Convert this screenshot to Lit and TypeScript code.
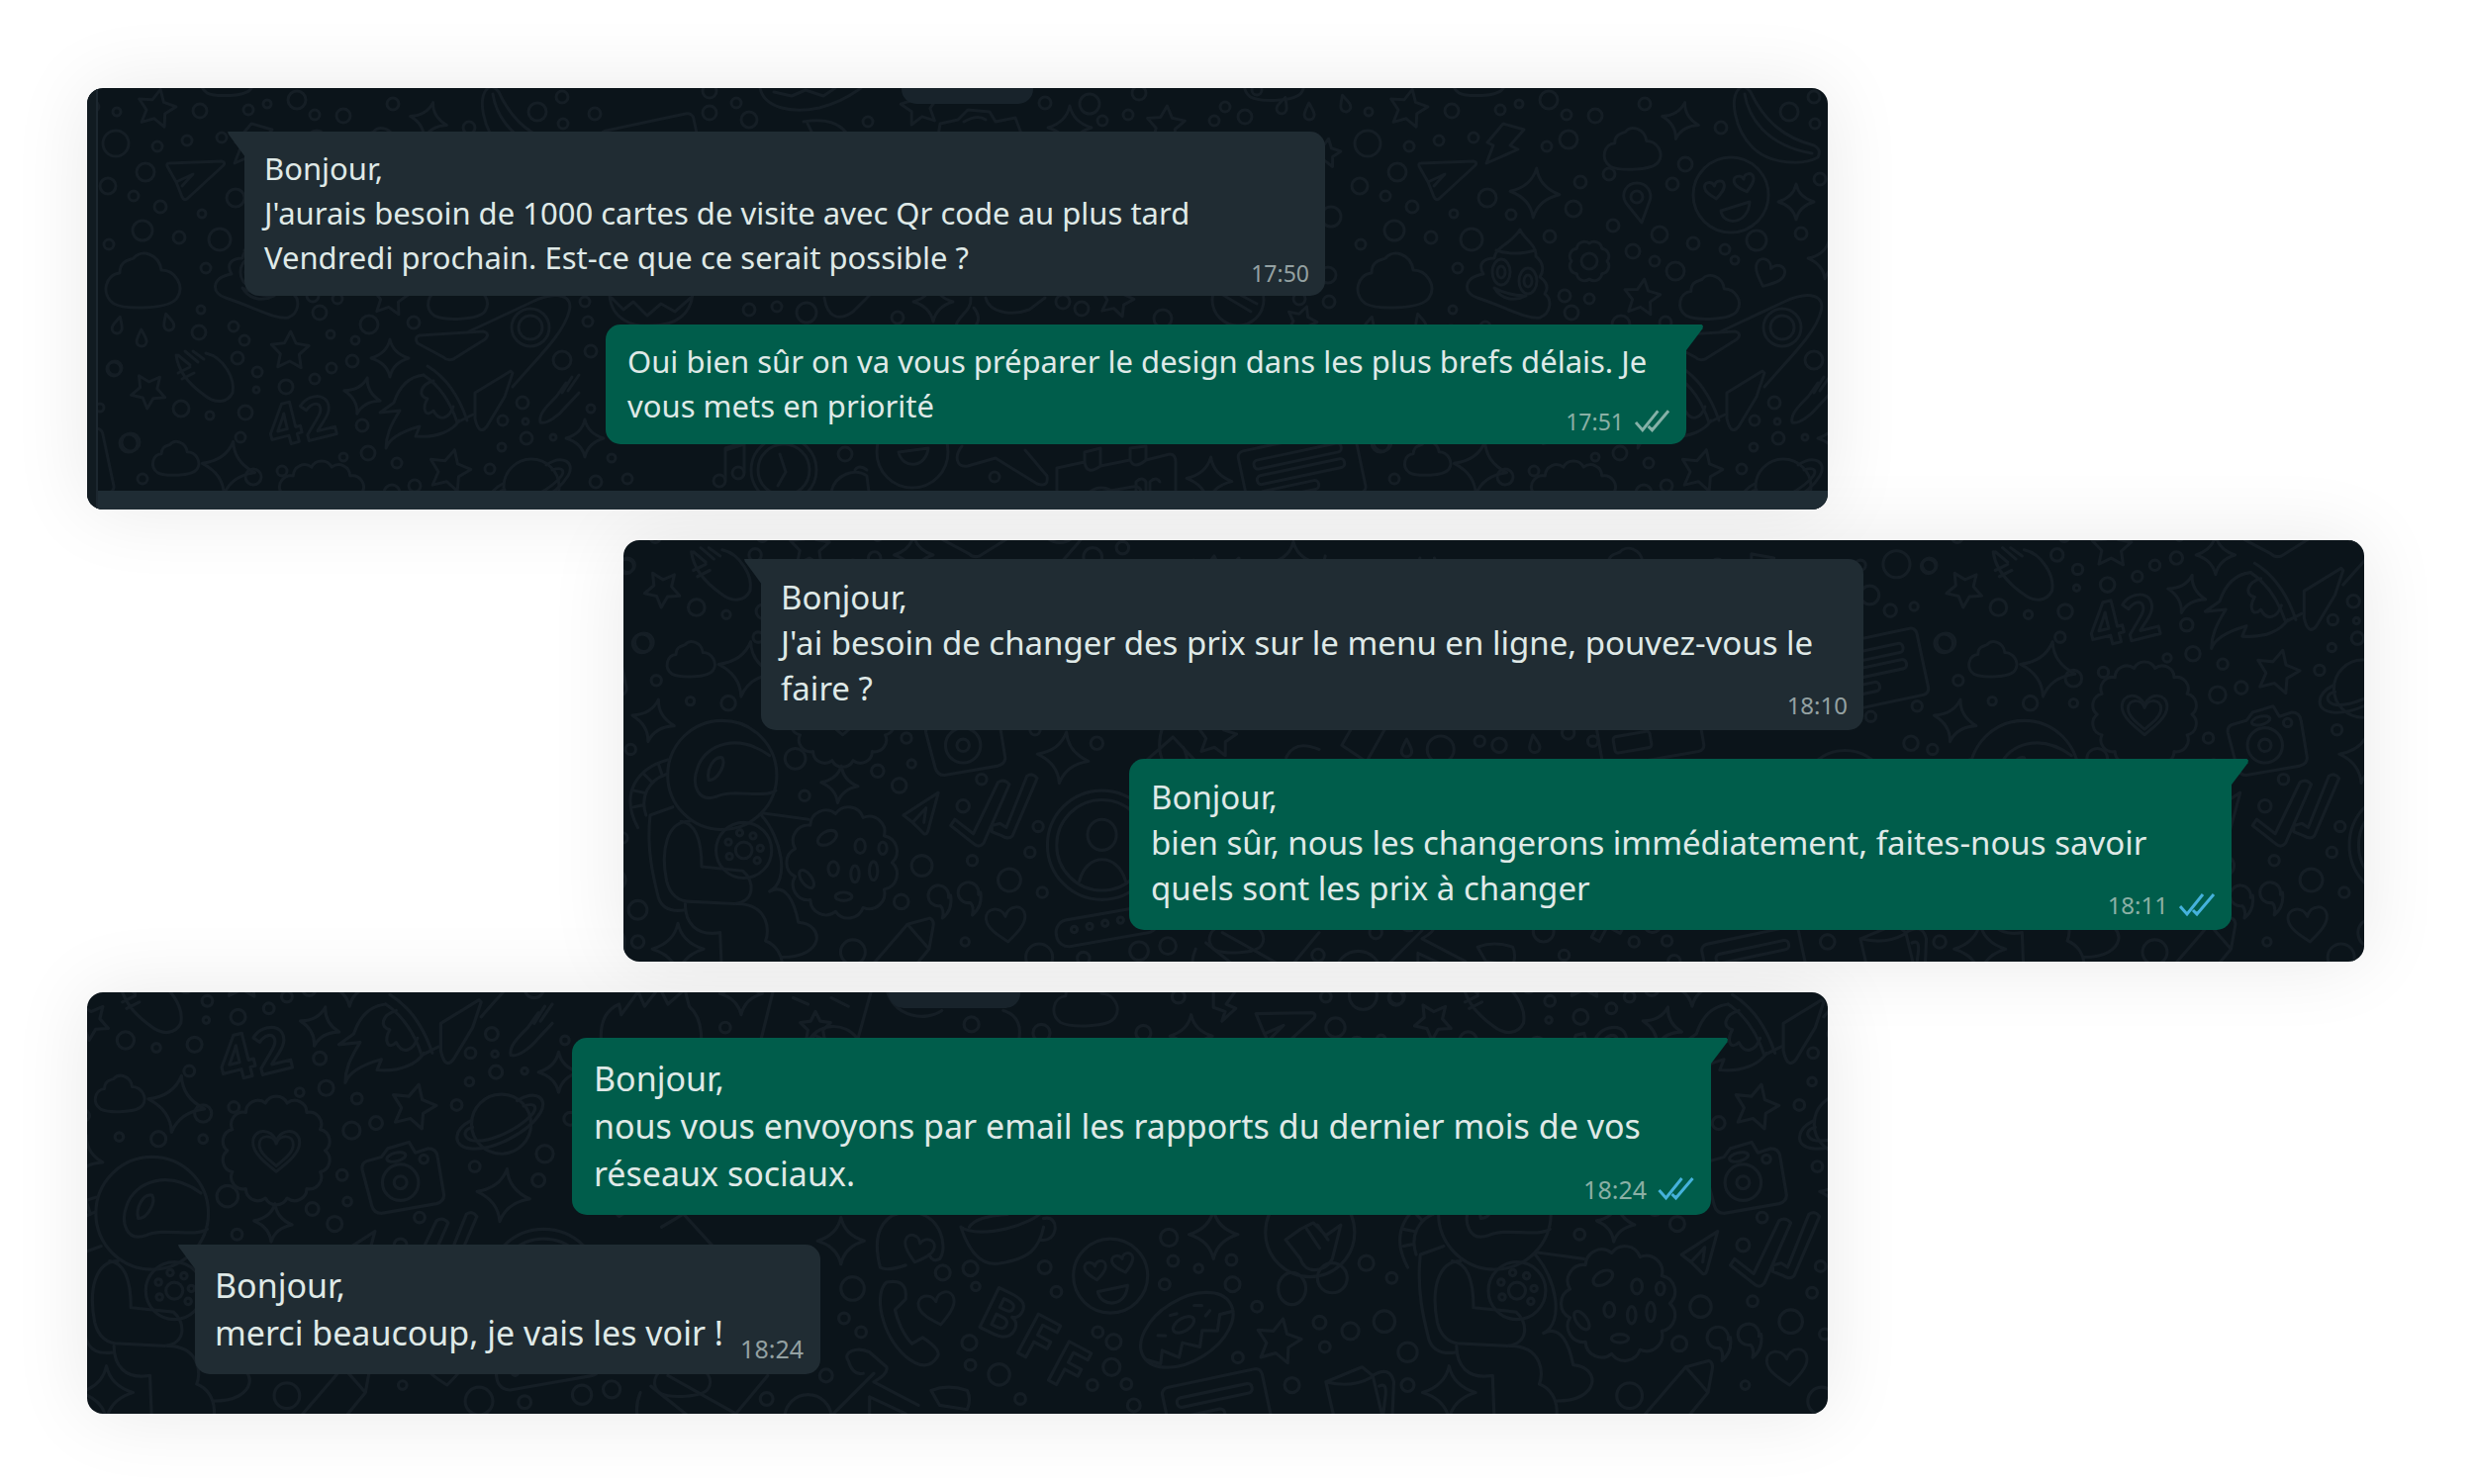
import { LitElement, html, css, svg, nothing } from "lit";
import { customElement, property } from "lit/decorators.js";

type Message = { side: "in" | "out"; lines: string[]; time: string; ticks?: "sent" | "read"; compact?: boolean };
type Chat = {
  name: string;
  place: "start" | "end";
  size: "small" | "medium" | "large";
  pill: boolean;
  framed: boolean;
  messages: Message[];
  wall: { x: number; y: number; scale: number };
};

const TILE = 1265;

/* Bubbles of the wallpaper: x, y, radius. */
const DOTS: number[][] = [
  [30,24,4],[114,23,7],[163,22,5],[182,16,4],[212,12,9],[230,27,5],[259,28,7],[309,16,6],[71,59,5],[101,53,5],[29,56,13],
  [59,85,9],[21,99,8],[47,109,5],[74,120,6],[116,127,4],[56,144,10],[93,151,6],[134,153,11],[22,158,5],[120,182,5],[136,50,5],
  [150,111,9],[386,40,6],[455,24,9],[480,9,6],[481,36,5],[513,26,6],[629,25,7],[656,15,5],[115,224,4],[113,247,7],[148,241,5],
  [159,255,5],[235,227,7],[285,239,9],[330,237,6],[246,249,4],[271,255,4],[268,276,6],[152,273,6],[172,287,5],[171,305,3],
  [201,302,7],[230,294,5],[247,283,5],[28,283,7],[95,324,8],[124,331,4],[160,328,7],[155,353,5],[44,358,9],[56,395,5],
  [197,387,5],[168,393,8],[259,373,4],[284,369,7],[313,379,5],[278,341,6],[440,318,6],[420,336,5],[443,337,3],[444,354,6],
  [471,353,3],[419,363,4],[509,266,6],[480,275,9],[509,324,4],[506,236,5],[503,216,5],[407,385,5],[514,398,6],[546,395,5],
  [530,374,4],[629,3,7],[669,32,8],[789,34,5],[968,15,6],[1013,16,10],[1026,33,5],[1052,27,5],[1063,5,7],[1139,33,5],
  [1150,19,5],[1170,29,7],[1182,2,5],[669,224,6],[697,221,5],[727,227,10],[819,232,6],[986,216,7],[1005,223,7],[1087,233,9],
  [766,370,7],[917,393,5],[210,59,5],[232,52,9],[244,95,6],[273,87,6],[237,122,8],[174,128,5],[213,150,6],[277,139,6],
  [350,77,7],[337,97,6],[324,148,8],[358,157,6],[297,165,7],[319,175,5],[390,163,5],[400,174,4],[340,185,9],[422,154,10],
  [467,147,6],[486,92,6],[228,210,6],[253,213,5],[1255,216,6],[1254,189,8],[1257,130,10],[1225,213,6],[126,417,7],
  [168,417,4],[89,415,4],[191,471,10],[200,507,5],[271,483,6],[292,497,7],[304,476,4],[299,451,5],[308,409,8],[331,402,6],
  [490,431,8],[424,443,5],[484,456,6],[372,491,5],[247,659,12],[356,649,4],[471,665,6],[525,658,9],[553,653,8],[428,664,13],
  [31,462,5],[42,359,9],[38,618,9],[38,649,6],[314,575,10],[294,610,7],[363,570,5],[419,562,5],[427,537,5],[354,517,6],
  [399,589,11],[431,601,5],[780,558,11],[865,543,7],[891,539,7],[896,556,4],[961,538,6],[972,561,5],[1078,510,8],[1082,532,5],
  [1106,539,4],[1137,531,5],[1074,554,5],[1138,554,7],[772,586,5],[788,599,5],[890,609,7],[891,630,5],[918,639,10],
  [1011,599,5],[1026,608,7],[1024,632,8],[1006,649,5],[1038,648,5],[1045,668,6],[938,662,5],[1161,575,5],[1143,623,5],
  [755,640,6],[699,662,6],[892,309,7],[958,317,8],[1054,317,7],[660,312,5],[1087,283,6],[1264,534,7],[23,548,5],[1220,590,6],
  [1249,598,8],[1225,613,5],[16,589,10],[1194,649,7],[1261,282,13],[27,284,7],[1226,283,5],[1235,312,9],[856,454,5],
  [875,458,7],[966,454,5],[942,446,6],[818,462,13],[1255,327,6],[13,323,4],[10,456,7],[1236,430,5],[16,420,5],
];

/* Five-pointed stars and four-pointed sparkles: x, y, radius, turn. */
const STARS: number[][] = [
  [70,21,20,12],[205,266,20,2],[62,306,18,-32],[366,387,22,14],[306,212,19,8],[1227,236,16,20],[1252,66,15,10],[842,19,20,-10],
  [1090,38,20,4],[1040,214,18,16],[1181,608,22,12],[745,312,15,0],[600,450,20,10],
];
const SPARKS: number[][] = [
  [345,33,19,14],[306,273,19,0],[278,311,19,16],[503,354,19,0],[143,384,27,10],[198,106,25,4],[462,115,18,0],[493,174,19,6],
  [993,40,22,0],[1134,396,23,4],[234,496,18,6],[451,470,25,8],[77,656,25,0],[53,434,21,14],[769,513,22,0],[1120,507,23,0],
  [855,216,20,0],[675,280,20,0],[1099,320,20,0],
];
const HEARTS: number[][] = [
  [434,188,15,24],[237,428,22,0],[237,428,16,0],[380,103,10,-8],[410,96,10,-14],[396,632,19,-6],[842,521,14,16],[860,577,17,-12],
  [1009,541,10,-8],[1035,534,10,-14],
];
/* Puffy clouds: x, y, scale. */
const CLOUDS: number[][] = [[57,194,1],[297,61,0.76],[375,211,0.8],[90,374,0.62],[1000,288,0.8],[142,-12,0.7],[1200,-10,0.8],[620,640,0.7]];
const DROPS: number[][] = [[31,240,15],[55,253,-2],[82,237,-15],[1208,18,18],[1235,24,-2],[6,16,-16],[785,461,0],[909,457,-8]];

const ring = (n: number, outer: number, inner: number, start = -90) =>
  Array.from({ length: n * 2 }, (_, i) => {
    const a = ((start + (i * 180) / n) * Math.PI) / 180;
    const r = i % 2 ? inner : outer;
    return `${(r * Math.cos(a)).toFixed(1)} ${(r * Math.sin(a)).toFixed(1)}`;
  }).join(" L");

const scallop = (n: number, r: number) => {
  const at = (i: number) => {
    const a = (i * 2 * Math.PI) / n;
    return `${(r * Math.cos(a)).toFixed(1)} ${(r * Math.sin(a)).toFixed(1)}`;
  };
  const bump = ((Math.PI * r) / n) * 1.1;
  let d = `M${at(0)}`;
  for (let i = 1; i <= n; i++) d += ` A${bump.toFixed(1)} ${bump.toFixed(1)} 0 0 1 ${at(i)}`;
  return d + "Z";
};

const spark = (r: number) => {
  const k = r * 0.16;
  return `M0 ${-r}Q${k} ${-k * 1.6} ${r} 0Q${k} ${k * 1.6} 0 ${r}Q${-k} ${k * 1.6} ${-r} 0Q${-k} ${-k * 1.6} 0 ${-r}Z`;
};

const HEART = "M0 .9C-.5 .5 -1 .1 -1 -.35C-1 -.95 -.2 -1 0 -.4C.2 -1 1 -.95 1 -.35C1 .1 .5 .5 0 .9Z";
const CLOUD =
  "M-30 24C-44 14 -38 -6 -24 -7C-24 -20 -14 -20 -10 -22C-2 -32 16 -26 18 -10C32 -10 42 6 34 18C26 30 -18 30 -30 24Z";

const place = (x: number, y: number, turn = 0, scale = 1) => `translate(${x} ${y}) rotate(${turn}) scale(${scale})`;

const doodles = () => svg`
  ${DOTS.map(([x, y, r]) => svg`<circle cx=${x} cy=${y} r=${r}></circle>`)}
  ${STARS.map(([x, y, r, t]) => svg`<path transform=${place(x, y, t)} d=${`M${ring(5, r, r * 0.5)}Z`}></path>`)}
  ${SPARKS.map(([x, y, r, t]) => svg`<path transform=${place(x, y, t)} d=${spark(r)}></path>`)}
  ${HEARTS.map(([x, y, r, t]) => svg`<path vector-effect="non-scaling-stroke" transform=${place(x, y, t, r)} d=${HEART}></path>`)}
  ${CLOUDS.map(([x, y, s]) => svg`<path vector-effect="non-scaling-stroke" transform=${place(x, y, 0, s)} d=${CLOUD}></path>`)}
  ${DROPS.map(([x, y, t]) => svg`<path transform=${place(x, y, t)} d="M0 -9C3 -3 5 0 5 3A5 5 0 0 1 -5 3C-5 0 -3 -3 0 -9Z"></path>`)}

  <!-- paper planes -->
  <path d="M83 76L136 74Q140 75 138 78L101 112Q98 114 96 110L90 95L81 79Q80 76 83 76ZM90 95L107 87L96 99"></path>
  <path d="M330 504L296 526L305 533L316 544Q319 545 320 541ZM305 533L318 519L316 533"></path>
  <path d="M1160 299L1213 298Q1217 299 1215 303L1178 337L1168 318ZM1168 318L1186 310L1174 322"></path>
  <!-- lightning -->
  <path d="M166 36L187 42L173 58L181 62L149 76L156 58L150 55Z"></path>
  <path d="M1120 272L1142 276L1132 290L1141 294L1128 306L1131 297L1120 293Z"></path>

  <!-- pile with eyes -->
  <path d="M183 143C186 152 200 158 199 170C206 176 208 184 203 191C210 196 212 202 208 208C216 214 214 228 203 232C190 234 170 222 140 212C126 208 124 192 146 188C140 178 146 172 157 172C158 160 174 158 183 143Z"></path>
  <path d="M159 164C170 168 186 168 198 164M157 202C164 214 178 216 189 210C180 210 168 208 157 202Z"></path>
  <ellipse cx="164" cy="186" rx="9" ry="13"></ellipse><ellipse cx="164" cy="186" rx="4" ry="6"></ellipse>
  <ellipse cx="191" cy="195" rx="9" ry="13"></ellipse><ellipse cx="191" cy="195" rx="4" ry="6"></ellipse>

  <!-- gear, pin -->
  <path transform=${place(253, 175)} d=${scallop(8, 18)}></path><circle cx="253" cy="175" r="8"></circle>
  <path d="M301 96C312 96 317 106 314 114L306 136L290 116C284 106 291 96 301 96Z"></path><circle cx="301" cy="110" r="6"></circle>

  <!-- smiling faces -->
  <circle cx="396" cy="108" r="38"></circle><path d="M386 124L415 115C414 138 388 140 386 124Z"></path>
  <circle cx="1023" cy="546" r="35"></circle><path d="M1011 561L1039 555C1038 576 1014 576 1011 561Z"></path>
  <circle cx="834" cy="368" r="36"></circle><path d="M820 368L850 364C848 384 824 386 820 368Z"></path>

  <!-- banana -->
  <path d="M405 0C394 10 400 42 418 60C436 78 470 78 484 70Q488 62 480 58C450 50 430 34 416 4Q410 -4 405 0ZM410 6C414 30 432 58 478 66"></path>

  <!-- mittens -->
  <path d="M92 270L104 280M99 266L112 277M107 266L118 274M90 270C92 286 104 300 118 310C130 320 142 318 147 308C150 294 138 272 120 268M92 288L104 282M96 294L108 288"></path>
  <path d="M497 290L486 306M490 292L480 308M484 298L474 312C464 322 456 330 458 338C464 340 476 332 484 322L497 308"></path>
  <path d="M745 212C748 232 760 236 774 226L792 208"></path>

  <!-- rocket -->
  <path d="M386 246L450 216C476 204 492 210 487 226C482 248 452 276 430 302"></path>
  <circle cx="448" cy="242" r="19"></circle><circle cx="448" cy="242" r="12"></circle>
  <path d="M336 250L400 246Q408 248 402 254L370 274Q364 276 360 272L334 258Q330 252 336 250Z"></path>
  <path d="M428 286L392 308L392 334Q396 352 404 342L422 312L430 288Z"></path>
  <path d="M344 281C362 292 376 312 384 336M340 290C358 302 368 320 374 338L390 330"></path>
  <path d="M340 290C322 292 314 306 310 318L296 328L316 326C306 342 302 352 302 364C306 352 322 346 336 342L332 352C354 354 370 346 376 336"></path>
  <path d="M350 296C336 300 334 312 344 314C338 324 342 334 350 326C356 338 366 334 370 322"></path>

  <!-- doodled lettering -->
  <text class="doodle-text" transform="translate(188 364) rotate(-14)">4</text>
  <text class="doodle-text" transform="translate(222 357) rotate(-14)">2</text>
  <text class="doodle-text" transform="translate(895 592) rotate(26)">B</text>
  <text class="doodle-text" transform="translate(931 616) rotate(28)">F</text>
  <text class="doodle-text" transform="translate(960 642) rotate(28)">F</text>

  <!-- badge, planet, camera -->
  <path transform=${place(237, 428)} d=${scallop(14, 46)}></path>
  <circle cx="449" cy="403" r="28"></circle>
  <path d="M464 381C480 370 494 378 486 392C474 412 440 428 420 426C402 424 404 408 420 400M470 386C482 382 484 388 476 396C462 410 434 422 420 418C412 414 414 408 422 406"></path>
  <path d="M322 438L336 434L342 426L362 420L368 430L380 426Q388 426 389 434L395 470Q395 476 388 478L336 487Q329 487 327 480L318 446Q317 440 322 438Z"></path>
  <circle cx="354" cy="458" r="17"></circle><circle cx="354" cy="458" r="6"></circle><circle cx="376" cy="436" r="4"></circle>
  <ellipse cx="350" cy="434" rx="9" ry="4" transform="rotate(-14 350 434)"></ellipse>

  <!-- astronaut -->
  <circle cx="120" cy="487" r="53"></circle>
  <path d="M172 502C160 510 130 500 114 508C96 514 90 496 96 480C104 456 136 446 166 468M107 492C104 482 112 468 120 470C124 476 116 492 107 492Z"></path>
  <path d="M67 472C38 480 20 504 38 538M66 486C48 492 40 508 46 526M58 476L62 488M44 486L52 494M34 502L44 504M34 518L44 516"></path>
  <path d="M72 518L50 526C46 560 54 590 58 606C62 618 72 620 84 618M88 532C66 532 60 560 66 590C70 606 80 610 90 610L132 612C152 610 152 590 140 580L100 576C100 556 96 534 80 532"></path>
  <circle cx="141" cy="560" r="27"></circle><circle cx="141" cy="560" r="8"></circle>
  <circle cx="137" cy="543" r="3"></circle><circle cx="150" cy="546" r="3"></circle><circle cx="157" cy="558" r="3"></circle><circle cx="154" cy="570" r="3"></circle><circle cx="126" cy="552" r="3"></circle><circle cx="127" cy="566" r="3"></circle>
  <path d="M158 526C178 548 186 590 166 600C182 592 190 610 194 630C220 632 220 664 178 664M84 612C84 630 94 644 118 640L120 690M134 612C166 612 166 640 162 648C184 656 182 690 168 690M160 524L204 530"></path>

  <!-- cookie -->
  <path transform=${place(237, 572)} d=${scallop(11, 48)}></path>
  <ellipse cx="222" cy="548" rx="10" ry="6" transform="rotate(-30 222 548)"></ellipse><ellipse cx="254" cy="556" rx="5" ry="7"></ellipse>
  <ellipse cx="228" cy="578" rx="5" ry="7"></ellipse><ellipse cx="249" cy="583" rx="4" ry="8"></ellipse><ellipse cx="267" cy="580" rx="4" ry="9"></ellipse>
  <ellipse cx="202" cy="588" rx="5" ry="10" transform="rotate(-36 202 588)"></ellipse><ellipse cx="238" cy="605" rx="8" ry="4"></ellipse><ellipse cx="276" cy="558" rx="4" ry="6"></ellipse>

  <!-- double tick -->
  <path d="M342 536L346 530L364 544L388 494Q394 490 399 496L374 553Q370 558 365 554ZM382 536L390 534L396 538L416 488Q422 484 426 490L402 546Q398 550 392 546L382 542Z"></path>

  <!-- avatar and code field -->
  <circle cx="489" cy="555" r="53"></circle><circle cx="489" cy="555" r="44"></circle><ellipse cx="489" cy="545" rx="14" ry="15"></ellipse>
  <path d="M467 590C474 562 504 562 512 590"></path>
  <rect x="444" y="621" width="100" height="26" rx="12" transform="rotate(-10 494 634)"></rect>
  <circle cx="462" cy="637" r="3"></circle><circle cx="477" cy="634" r="3"></circle><circle cx="492" cy="631" r="3"></circle><circle cx="507" cy="628" r="3"></circle>

  <!-- quotes, crayon -->
  <path d="M340 606A10 10 0 1 0 332 614Q336 618 334 626Q344 618 342 604M369 603A10 10 0 1 0 361 611Q365 615 363 623Q373 615 371 601"></path>
  <path d="M262 676L300 632L322 626Q326 628 325 634L321 656L288 696M300 632L321 656"></path>

  <!-- creature, bag and desk things -->
  <path d="M546 342C538 310 546 296 560 290L562 300L578 278L584 292L598 274L606 290L622 276L626 292C640 304 640 330 632 344"></path>
  <path d="M706 274L694 322M798 276L784 326M724 284L738 290M760 284L776 292M738 326A26 24 0 0 1 784 322"></path>
  <path d="M812 276C820 304 850 306 864 296M922 296C936 300 940 312 936 326"></path>
  <path d="M645 396V364L664 358V388M645 366L664 360"></path><circle cx="639" cy="397" r="6"></circle><circle cx="658" cy="389" r="6"></circle>
  <circle cx="704" cy="386" r="33"></circle><circle cx="704" cy="386" r="26"></circle><path d="M700 370L706 388L698 402"></path>
  <path d="M752 408C756 390 776 384 788 392L790 408M776 386Q780 380 788 386"></path>
  <path d="M884 362C876 372 878 384 890 382L918 374L960 400Q972 404 970 392L948 366"></path>
  <path d="M980 384L1008 378V368L1024 364V382L1054 376V364L1070 362V376L1094 370Q1100 370 1100 378V412M980 384V412M1008 378Q1010 392 1024 382M1054 376Q1058 386 1070 376M1010 412A18 18 0 0 1 1040 412M1060 412V398Q1066 392 1070 398V412M1074 412V398Q1080 392 1084 398"></path>

  <!-- letter with lines -->
  <g transform="translate(1227 385) rotate(-12)">
    <rect x="-60" y="-30" width="120" height="66" rx="6"></rect>
    <rect x="-46" y="-18" width="90" height="9" rx="4"></rect><rect x="-46" y="-2" width="90" height="9" rx="4"></rect><rect x="-46" y="14" width="60" height="9" rx="4"></rect>
  </g>
  <g transform="translate(1123 668) rotate(-12)">
    <rect x="-48" y="-26" width="96" height="66" rx="6"></rect><rect x="-36" y="-14" width="72" height="9" rx="4"></rect><rect x="-36" y="4" width="42" height="9" rx="4"></rect>
  </g>
  <g transform="translate(1020 440) rotate(-10)"><rect x="-50" y="-30" width="100" height="62" rx="6"></rect><rect x="-36" y="4" width="36" height="16" rx="3"></rect></g>
  <g transform="translate(570 60) rotate(-12)"><rect x="-48" y="-26" width="96" height="60" rx="6"></rect></g>

  <!-- doughnuts -->
  <path d="M528 210C530 234 552 242 570 240C596 240 610 228 612 208M530 212L542 224L552 216L566 230L580 218L594 226L610 212"></path>
  <path d="M680 0C684 20 712 26 740 20C764 14 776 4 782 0M694 4L712 8L726 2L744 8L756 0"></path>
  <path d="M908 212C912 228 936 230 952 224L968 212"></path>
  <g transform="translate(1095 597) rotate(-32)">
    <ellipse cx="0" cy="0" rx="48" ry="29"></ellipse><ellipse cx="0" cy="-6" rx="11" ry="6"></ellipse>
    <path d="M-47 4L-38 14L-30 4L-20 18L-10 8L2 20L12 8L24 16L34 4L46 8M-26 -10L-20 -6M-6 -20L0 -18M18 -16L24 -12M28 -4L22 -2"></path>
  </g>

  <!-- photo and flower peeking out of a bubble -->
  <path d="M860 48L862 36L880 32L890 22L912 24L918 34L938 30L944 46M886 34Q900 26 908 32"></path>
  <path d="M724 34C748 30 760 36 768 46M728 36L734 48"></path>
  <circle cx="1163" cy="214" r="26"></circle><path d="M1146 208L1176 226M1152 202L1182 218"></path>
  <path d="M893 212C894 226 880 230 878 240M896 222Q904 232 898 240"></path>

  <!-- sticker, cup, phone -->
  <path d="M806 538C796 500 814 484 836 486C864 488 870 520 862 530Q856 534 852 526M806 538Q812 542 830 536"></path>
  <path d="M882 500C890 524 902 538 920 534C946 530 956 520 960 500M882 500C900 512 950 498 960 484M960 492C976 488 974 516 956 512M890 500Q896 490 926 488"></path>
  <path d="M812 552C800 562 806 600 830 622C844 634 854 632 860 622Q864 616 846 604L836 610C828 602 822 588 820 578L830 568Q832 548 812 552Z"></path>
  <path d="M776 626C770 618 784 612 796 618L812 632Q814 638 800 646L842 668M790 638Q780 640 776 626M800 638L762 676M796 660V676M796 660L830 676M854 654Q870 648 888 654Q892 662 888 672L862 668Z"></path>
  <circle cx="738" cy="680" r="22"></circle>
  <path d="M722 458L738 430L764 442L746 474ZM700 462Q676 452 668 470"></path>

  <!-- tulips in a ring, jug -->
  <circle cx="1211" cy="505" r="42"></circle>
  <path d="M1188 512L1202 502L1214 496L1226 508L1240 498L1232 530C1224 544 1206 544 1202 530ZM1208 502L1220 520M1218 498L1228 512"></path>
  <ellipse cx="1194" cy="558" rx="13" ry="15"></ellipse><ellipse cx="1232" cy="548" rx="14" ry="14"></ellipse>
  <path d="M1226 646L1260 632L1270 640L1282 690M1226 646L1236 690M1226 646Q1250 652 1268 642M1270 640Q1286 630 1290 646L1288 690M1276 650Q1284 646 1282 660L1280 676"></path>
  <path d="M526 478L558 450L590 484M548 440Q538 470 560 490Q578 480 568 460M610 476L650 520M600 500L640 476"></path>
  <path d="M590 650L640 690M606 640L670 676L700 640M580 656Q570 680 590 700"></path>
`;

@customElement("chat-wallpaper")
class ChatWallpaper extends LitElement {
  @property({ attribute: false }) wall = { x: 0, y: 0, scale: 1 };

  static styles = css`
    :host { display: block; overflow: hidden; }
    .canvas { display: block; width: 100%; height: 100%; fill: none; stroke: #151e25; stroke-width: 3; stroke-linejoin: round; stroke-linecap: round; }
    .doodle-text { font: 700 58px "Open Sans", sans-serif; stroke-width: 3; }
  `;

  render() {
    const { x, y, scale } = this.wall;
    return html`<svg class="canvas" aria-hidden="true">
      <defs><g id="tile">${doodles()}</g></defs>
      <g transform=${`translate(${x} ${y}) scale(${scale})`}>
        ${[-1, 0, 1, 2].map((n) => svg`<use href="#tile" x=${n * TILE}></use>`)}
      </g>
    </svg>`;
  }
}

@customElement("chat-bubble")
class ChatBubble extends LitElement {
  @property({ attribute: false }) message!: Message;

  static styles = css`
    :host { display: block; max-width: 100%; box-sizing: border-box; }
    .bubble {
      position: relative;
      display: grid;
      box-sizing: border-box;
      padding: var(--pad) 16px var(--pad-end) 20px;
      border-radius: 15px;
      color: #dfe9e7;
      font-size: var(--text);
      line-height: var(--line);
    }
    .in { background: #202c33; border-top-left-radius: 0; }
    .out { background: #005d4b; border-top-right-radius: 0; padding-left: 22px; }
    .bubble::before { content: ""; position: absolute; top: 0; width: 18px; height: 26px; background: inherit; }
    .in::before { right: calc(100% - 1px); clip-path: polygon(0 0, 100% 0, 100% 100%, 94% 94%, 4% 10%); }
    .out::before { left: calc(100% - 1px); clip-path: polygon(0 0, 92% 0, 100% 6%, 97% 16%, 6% 100%, 0 100%); }
    .text { grid-area: 1 / 1; margin: 0; white-space: nowrap; }
    .meta {
      grid-area: 1 / 1;
      align-self: end;
      justify-self: end;
      display: flex;
      align-items: center;
      gap: 11px;
      height: 24px;
      margin-bottom: calc(var(--foot) - var(--pad-end));
      color: #94a1a2;
      font-size: var(--time);
      line-height: 24px;
    }
    .out .meta { color: #8bb0a5; }
    .compact { grid-template-columns: auto auto; justify-content: space-between; column-gap: 16px; padding-right: 17px; }
    .compact .meta { grid-area: 1 / 2; }
    .ticks { width: var(--ticks); height: 24px; fill: none; stroke-width: 3; }
    .sent { stroke: #86b1a8; }
    .read { stroke: #45b2dc; }
  `;

  render() {
    const m = this.message;
    return html`<article class="bubble ${m.side} ${m.compact ? "compact" : ""}">
      <p class="text">${m.lines.map((line, i) => html`${i ? html`<br />` : nothing}${line}`)}</p>
      <span class="meta">
        <time>${m.time}</time>
        ${m.ticks
          ? html`<svg class="ticks ${m.ticks}" viewBox="0 0 37 24" role="img" aria-label=${m.ticks === "read" ? "Lu" : "Distribué"}>
              <path d="M1 13L8 21L24 1M14 17L18 21L35 1M17 21L19 19"></path>
            </svg>`
          : nothing}
      </span>
    </article>`;
  }
}

@customElement("app-root")
class AppRoot extends LitElement {
  private chats: Chat[] = [
    {
      name: "Cartes de visite", place: "start", size: "small", pill: true, framed: true, wall: { x: 0, y: 0, scale: 1 },
      messages: [
        { side: "in", time: "17:50", lines: ["Bonjour,", "J'aurais besoin de 1000 cartes de visite avec Qr code au plus tard", "Vendredi prochain. Est-ce que ce serait possible ?"] },
        { side: "out", time: "17:51", ticks: "sent", lines: ["Oui bien sûr on va vous préparer le design dans les plus brefs délais. Je", "vous mets en priorité"] },
      ],
    },
    {
      name: "Menu en ligne", place: "end", size: "medium", pill: false, framed: false, wall: { x: -25, y: -269, scale: 1.04 },
      messages: [
        { side: "in", time: "18:10", lines: ["Bonjour,", "J'ai besoin de changer des prix sur le menu en ligne, pouvez-vous le", "faire ?"] },
        { side: "out", time: "18:11", ticks: "read", lines: ["Bonjour,", "bien sûr, nous les changerons immédiatement, faites-nous savoir", "quels sont les prix à changer"] },
      ],
    },
    {
      name: "Réseaux sociaux", place: "start", size: "large", pill: true, framed: false, wall: { x: -63, y: -299, scale: 1.0725 },
      messages: [
        { side: "out", time: "18:24", ticks: "read", lines: ["Bonjour,", "nous vous envoyons par email les rapports du dernier mois de vos", "réseaux sociaux."] },
        { side: "in", time: "18:24", compact: true, lines: ["Bonjour,", "merci beaucoup, je vais les voir !"] },
      ],
    },
  ];

  static styles = css`
    :host { display: block; min-height: 100vh; background: #fff; font-family: "Noto Sans", "Open Sans", sans-serif; }
    .page {
      display: grid;
      grid-template-columns: 542px minmax(0, 1fr) 542px;
      gap: 31px 0;
      padding: 89px 111px 71px 88px;
    }
    .panel {
      position: relative;
      display: flex;
      border-radius: 16px;
      overflow: hidden;
      background: #0b141a;
    }
    .card { border-radius: 16px; box-shadow: 0 0 80px rgba(0, 0, 0, 0.09); }
    .start { grid-column: 1 / 3; }
    .end { grid-column: 2 / 4; }
    .wall { position: absolute; inset: 0; }
    .rail { position: relative; width: 9px; background: #111b21; border-right: 2px solid #1c272f; }
    .body { position: relative; flex: 1; display: flex; flex-direction: column; }
    .thread { display: flex; flex-direction: column; gap: var(--gap); margin: 0; list-style: none; }
    .item { display: flex; }
    .item.out { justify-content: flex-end; }
    .wide { width: var(--bubble); }
    .compact { width: 632px; }
    .footer { height: 19px; background: #1f2c34; }
    .pill { position: absolute; top: 0; left: calc(50% - 66px); width: 133px; height: 16px; border-radius: 0 0 15px 15px; background: #18232b; }
    .small .pill { left: calc(50% - 62px); }
    .large .pill { left: calc(50% - 70px); }

    .small { --text: 31px; --line: 45px; --pad: 15px; --pad-end: 16px; --foot: 11px; --gap: 29px; --time: 23px; --ticks: 36px; --bubble: 1092px; }
    .medium { --text: 33px; --line: 46px; --pad: 16px; --pad-end: 19px; --foot: 13px; --gap: 29px; --time: 24px; --ticks: 37px; --bubble: 1114px; }
    .large { --text: 34px; --line: 48px; --pad: 17px; --pad-end: 18px; --foot: 14px; --gap: 30px; --time: 25px; --ticks: 38px; --bubble: 1151px; }
    .small .thread { padding: 44px 143px 47px 148px; }
    .medium .thread { padding: 19px 134px 32px 139px; }
    .large .thread { padding: 46px 118px 40px 109px; }
  `;

  render() {
    return html`<main class="page">
      ${this.chats.map(
        (c) => html`<div class="card ${c.place}">
          <section class="panel ${c.size}" aria-label=${c.name}>
            <chat-wallpaper class="wall" .wall=${c.wall}></chat-wallpaper>
            ${c.framed ? html`<div class="rail"></div>` : nothing}
            <div class="body">
              ${c.pill ? html`<div class="pill"></div>` : nothing}
              <ul class="thread">
                ${c.messages.map(
                  (m) => html`<li class="item ${m.side}">
                    <chat-bubble class=${m.compact ? "compact" : "wide"} .message=${m}></chat-bubble>
                  </li>`
                )}
              </ul>
              ${c.framed ? html`<div class="footer"></div>` : nothing}
            </div>
          </section>
        </div>`
      )}
    </main>`;
  }
}
